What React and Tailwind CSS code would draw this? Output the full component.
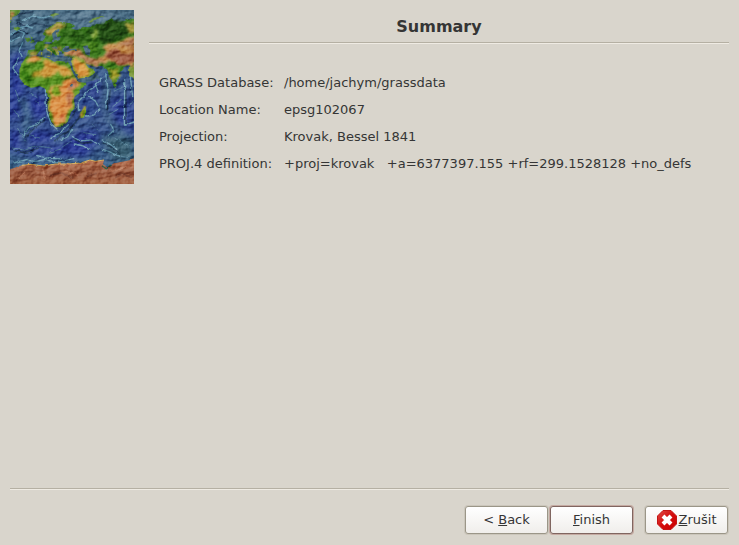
import React from 'react';

const rows = [
  { label: 'GRASS Database:', value: '/home/jachym/grassdata' },
  { label: 'Location Name:', value: 'epsg102067' },
  { label: 'Projection:', value: 'Krovak, Bessel 1841' },
  { label: 'PROJ.4 definition:', value: '+proj=krovak   +a=6377397.155 +rf=299.1528128 +no_defs' },
];

const ReliefMap = () => (
  <svg viewBox="30 30 372 522" className="block w-[124px] h-[174px] shrink-0" role="img" aria-label="Relief map">
    <defs>
      <linearGradient id="sea" x1="0" y1="0" x2="0" y2="1">
        <stop offset="0" stopColor="#4c6f86" />
        <stop offset="0.2" stopColor="#436783" />
        <stop offset="0.38" stopColor="#37578a" />
        <stop offset="0.6" stopColor="#344d8d" />
        <stop offset="0.78" stopColor="#36568b" />
        <stop offset="1" stopColor="#47738a" />
      </linearGradient>
      <linearGradient id="ice" x1="0" y1="0" x2="0" y2="1">
        <stop offset="0" stopColor="#b87453" />
        <stop offset="0.5" stopColor="#9a5a40" />
        <stop offset="1" stopColor="#a4603f" />
      </linearGradient>
      <filter id="rough" x="-5%" y="-5%" width="110%" height="110%" colorInterpolationFilters="sRGB">
        <feTurbulence type="fractalNoise" baseFrequency="0.06" numOctaves="2" seed="4" result="n" />
        <feDisplacementMap in="SourceGraphic" in2="n" scale="9" xChannelSelector="R" yChannelSelector="G" />
      </filter>
      <filter id="soft" x="-20%" y="-20%" width="140%" height="140%" colorInterpolationFilters="sRGB">
        <feTurbulence type="fractalNoise" baseFrequency="0.05" numOctaves="3" seed="9" result="n" />
        <feDisplacementMap in="SourceGraphic" in2="n" scale="24" xChannelSelector="R" yChannelSelector="G" />
        <feGaussianBlur stdDeviation="2.5" />
      </filter>
      <filter id="haze" x="-30%" y="-30%" width="160%" height="160%" colorInterpolationFilters="sRGB">
        <feGaussianBlur stdDeviation="11" />
      </filter>
      <filter id="relief" x="0" y="0" width="100%" height="100%" colorInterpolationFilters="sRGB">
        <feTurbulence type="fractalNoise" baseFrequency="0.035 0.05" numOctaves="4" seed="12" result="n" />
        <feColorMatrix in="n" type="matrix" values="0 0 0 0 0  0 0 0 0 0  0 0 0 0 0  1.4 0 0 0 -0.2" />
        <feDiffuseLighting surfaceScale="6" diffuseConstant="0.72" lightingColor="#ffffff">
          <feDistantLight azimuth="225" elevation="44" />
        </feDiffuseLighting>
      </filter>
      <clipPath id="frame">
        <rect x="30" y="30" width="372" height="522" />
      </clipPath>
    </defs>

    <g clipPath="url(#frame)">
      <rect x="30" y="30" width="372" height="522" fill="url(#sea)" />

      {/* deep basins and ridges */}
      <g filter="url(#haze)" opacity="0.8">
        <path d="M30 165 L75 150 L55 205 L75 270 L50 350 L30 360Z" fill="#29379a" />
        <path d="M85 285 L140 290 L135 350 L95 350Z" fill="#2b389c" />
        <path d="M30 390 L150 395 L180 440 L250 390 L300 400 L260 470 L90 465 L30 450Z" fill="#2b379b" />
        <path d="M265 235 L310 235 L300 300 L262 290Z" fill="#30418e" />
        <path d="M325 300 L372 290 L380 400 L325 370Z" fill="#2c3c95" />
        <path d="M240 300 L270 285 L290 340 L250 350Z" fill="#2f4c92" />
        <path d="M380 290 L402 280 L402 420 L380 400Z" fill="#31458e" />
        <path d="M60 290 L85 340 L70 430" fill="none" stroke="#467188" strokeWidth="20" />
        <path d="M320 230 L315 320 L335 370 L370 400" fill="none" stroke="#4b7387" strokeWidth="18" />
        <path d="M60 445 L170 430 L245 375 L320 360" fill="none" stroke="#4c6d92" strokeWidth="13" />
        <path d="M300 405 L402 410 L402 485 L340 480Z" fill="#3c6470" />
        <path d="M150 45 L260 35 L360 40 L300 70 L180 65Z" fill="#628096" />
      </g>

      <g filter="url(#rough)" fill="none" strokeLinecap="round" strokeLinejoin="round">
        <g stroke="#203955" strokeWidth="5" opacity="0.75">
          <path d="M32 47 L68 40 L98 35" />
          <path d="M53 68 L79 83 L103 70 L141 77" />
          <path d="M38 105 L66 91 L82 101" />
          <path d="M143 288 L145 345 L168 386 L188 380 L217 349 L235 316" />
          <path d="M78 411 L106 381 L132 363" />
          <path d="M164 422 L205 394 L240 350" />
          <path d="M331 272 L322 329" />
          <path d="M377 268 L379 372" />
          <path d="M222 417 L244 430 L275 427 M310 427 L332 440 L352 455 M40 451 L76 458 L114 445" />
        </g>
        <g stroke="#6d9db2" strokeWidth="4">
          <path d="M70 61 L99 48 L125 54 L157 47" />
          <path d="M59 84 L79 78 L97 84" />
          <path d="M30 104 L53 91 L74 99 L67 113" />
          <path d="M32 123 L60 111" />
          <path d="M55 177 L39 205 L53 224" />
          <path d="M68 128 L57 151 L66 169" />
          <path d="M136 265 L140 335 L154 372 L171 387" />
          <path d="M72 407 L87 382 L110 374 L135 352" />
          <path d="M153 416 L180 398 L205 374" />
          <path d="M181 421 L203 410 L218 385" />
          <path d="M236 335 L234 306 L265 272 L289 257" />
          <path d="M266 289 L286 303 L294 318" />
          <path d="M296 277 L286 254 L305 232" />
          <path d="M317 221 L324 267 L318 325" />
          <path d="M374 235 L373 376 L402 366" />
          <path d="M390 221 L398 289" />
          <path d="M259 348 L282 345 L299 329" />
          <path d="M218 410 L240 423 L273 420 L299 435" />
          <path d="M307 420 L330 433 L350 448" />
          <path d="M325 407 L342 390 L332 373" />
          <path d="M223 432 L250 438 L266 448" />
          <path d="M307 448 L328 455 L358 469" />
          <path d="M111 467 L145 475 L184 477" />
          <path d="M38 489 L79 479 L105 485 L134 478 L169 488 L221 476" />
        </g>
        <g stroke="#5a879e" strokeWidth="3" opacity="0.8">
          <path d="M37 443 L74 451 L112 438 L153 444" />
          <path d="M46 270 L60 306 M42 330 L57 352 M92 279 L112 293 M107 304 L123 318" />
          <path d="M53 385 L77 423 M91 405 L119 414 M188 440 L211 425 M150 457 L183 447" />
          <path d="M343 273 L366 263 M338 320 L365 298 M324 345 L354 328 M389 318 L400 302" />
          <path d="M277 370 L293 390 M251 397 L285 404 M345 415 L390 439 M364 469 L394 475" />
        </g>
      </g>

      {/* Eurasia and Africa */}
      <g filter="url(#rough)">
        <path d="M82 167 L84 151 L106 148 L104 139 L113 125 L130 122 L137 109 L128 102 L139 88 L158 74 L182 66 L210 70 L226 78 L213 85 L229 91 L249 81 L275 82 L286 72 L311 75 L318 64 L333 57 L349 69 L371 64 L386 58 L406 61 L406 203 L386 195 L370 202 L359 219 L350 245 L340 253 L329 229 L322 209 L306 198 L279 199 L256 189 L247 174 L222 171 L195 168 L188 157 L177 151 L169 139 L155 142 L174 160 L169 168 L145 147 L123 149 L109 165Z" fill="#3d791f" />
        <path d="M80 169 L67 188 L58 209 L59 235 L73 253 L94 264 L119 258 L136 266 L142 284 L147 303 L143 322 L150 356 L167 381 L184 380 L203 365 L213 336 L226 323 L221 297 L237 277 L260 248 L238 247 L228 232 L212 202 L203 185 L174 181 L164 186 L132 168 L107 170Z" fill="#5b9424" />
        <path d="M212 178 L225 165 L252 176 L258 190 L274 204 L286 216 L274 229 L237 243 L223 218Z" fill="#77a12b" />
        <path d="M256 317 L259 333 L253 352 L242 355 L241 338Z" fill="#6ca620" />
        <path d="M91 107 L99 109 L96 117 L105 126 L90 129 L96 120Z M79 116 L87 112 L86 124 L78 126Z" fill="#54872c" />
        <path d="M30 30 L64 30 L55 42 L39 53 L30 70Z M38 87 L53 80 L62 85 L51 92Z" fill="#649438" />
        <path d="M148 45 L166 39 L179 42 L159 50Z M265 67 L279 55 L305 48 L314 51 L290 58 L273 68Z" fill="#71944a" />
        <path d="M387 199 L406 194 L406 249 L398 232 L388 229Z" fill="#789638" />
        <path d="M342 248 L350 254 L347 264 L340 258Z" fill="#67a12d" />
      </g>

      {/* lowlands */}
      <g filter="url(#soft)">
        <path d="M305 70 L365 61 L389 76 L391 103 L363 118 L333 121 L307 135 L292 108 L266 104 L275 82Z" fill="#244f16" />
        <path d="M198 88 L245 92 L275 106 L271 127 L223 124 L193 112Z" fill="#2f6419" />
        <path d="M246 133 L289 124 L297 148 L271 159Z" fill="#49821e" />
        <path d="M67 200 L82 213 L92 241 L115 250 L77 253 L61 233Z" fill="#387b14" />
        <path d="M174 182 L205 184 L214 203 L192 196 L174 191Z" fill="#3b7e1e" />
        <path d="M171 226 L200 224 L208 236 L187 239Z" fill="#55911e" />
        <path d="M313 185 L332 184 L348 198 L375 197 L368 206 L333 208Z" fill="#3f7e1d" />
      </g>

      {/* highlands */}
      <g filter="url(#soft)">
        <path d="M79 184 L106 169 L129 172 L126 183 L92 190Z" fill="#d9984e" />
        <path d="M134 175 L162 189 L185 194 L210 205 L220 225 L194 227 L174 219 L157 235 L135 229 L116 215 L132 202Z" fill="#cf9b42" />
        <path d="M99 214 L116 211 L127 229 L113 236 L94 231Z" fill="#b99c34" />
        <path d="M142 272 L156 258 L181 256 L202 235 L227 229 L243 252 L223 276 L215 295 L219 317 L202 348 L190 371 L169 376 L151 347 L150 314 L158 294Z" fill="#db9249" />
        <path d="M217 179 L227 174 L248 191 L267 207 L266 225 L237 238 L223 213Z" fill="#d99b46" />
        <path d="M135 98 L155 79 L178 71 L202 73 L183 81 L162 102 L140 110Z" fill="#b79848" />
        <path d="M89 153 L108 150 L109 162 L91 166Z" fill="#d0974a" />
        <path d="M125 137 L143 131 L150 139 L136 145Z M158 139 L180 137 L180 146 L160 144Z" fill="#bd994b" />
        <path d="M279 85 L291 85 L289 114 L280 124Z" fill="#82a13c" />
        <path d="M303 139 L327 128 L352 130 L380 117 L406 107 L406 201 L375 191 L354 194 L329 181 L307 191 L283 187 L280 174 L310 168 L317 153Z" fill="#c58f50" />
        <path d="M374 70 L402 67 L402 99 L384 97Z" fill="#a89b40" />
        <path d="M192 155 L216 151 L251 154 L260 169 L278 177 L308 177 L309 190 L278 198 L258 187 L240 170 L194 168Z" fill="#bd8559" />
        <path d="M326 208 L354 204 L356 221 L343 245 L332 225Z" fill="#a59e2e" />
        <path d="M249 322 L255 323 L252 347 L246 345Z" fill="#db994f" />
        <path d="M31 35 L47 36 L35 54Z" fill="#c97b50" />
      </g>

      {/* high mountains */}
      <g filter="url(#soft)">
        <path d="M317 163 L343 147 L373 151 L406 139 L406 194 L377 190 L351 191 L326 175Z" fill="#a05d44" />
        <path d="M347 148 L375 149 L402 145 L402 160 L365 162Z" fill="#c08b48" />
        <path d="M356 135 L386 119 L406 111 L406 132 L377 140Z" fill="#ac7352" />
        <path d="M214 239 L232 235 L231 257 L217 277 L207 269Z M201 281 L216 285 L210 309 L197 323Z" fill="#b97550" />
        <path d="M261 168 L278 174 L293 191 L279 195 L256 181Z" fill="#a9734f" />
        <path d="M191 344 L198 338 L192 361 L182 362Z" fill="#d37e53" />
        <path d="M155 263 L174 259 L184 278 L178 291 L158 284Z" fill="#80a629" />
      </g>

      {/* inland water */}
      <g filter="url(#rough)" fill="#4a6a7d">
        <path d="M130 130 L138 125 L152 126 L160 116 L156 101 L166 91 L178 86 L179 91 L168 99 L172 111 L184 109 L176 120 L157 127 L147 134Z" />
        <path d="M112 166 L123 151 L139 148 L151 159 L160 171 L172 169 L179 175 L205 171 L218 177 L210 187 L180 183 L161 181 L139 169 L121 170Z" />
        <path d="M188 145 L203 138 L209 147 L228 146 L231 154 L214 151 L201 157 L187 154Z" />
        <path d="M249 139 L262 136 L271 151 L269 167 L257 163Z" />
        <path d="M209 191 L218 204 L235 236 L264 232 L289 218 L301 235 L264 246 L234 245 L219 219Z" fill="#3b5c73" />
        <path d="M257 191 L273 201 L286 202 L281 207 L266 203Z" fill="#4c7189" />
        <path d="M211 252 L219 252 L217 260 L210 259Z" />
      </g>

      {/* Italy and the Balkans */}
      <g filter="url(#rough)">
        <path d="M138 147 L146 146 L157 158 L154 165 L147 156Z M163 147 L178 150 L176 167 L169 161Z" fill="#8f9440" />
        <path d="M123 155 L127 155 L127 166 L122 166Z M143 168 L151 168 L148 172Z" fill="#8f9440" />
      </g>

      {/* Antarctica */}
      <g filter="url(#rough)">
        <path d="M24 510 L66 496 L90 493 L132 498 L164 492 L203 492 L241 489 L269 480 L286 484 L312 480 L309 493 L324 504 L344 490 L408 477 L408 560 L24 560Z" fill="url(#ice)" />
        <path d="M65 496 L91 493 L133 498 L164 492 L203 492 L242 489 L270 480 L286 484 L312 480" fill="none" stroke="#d7ae5c" strokeWidth="3" />
        <path d="M306 497 L319 507 L334 494" fill="none" stroke="#3b624b" strokeWidth="4" />
        <path d="M128 505 L134 540 M55 533 L73 520 M175 518 L205 514 L235 526 M332 515 L364 503 L402 499" fill="none" stroke="#c38567" strokeWidth="5" opacity="0.6" />
        <path d="M150 526 L184 518 L220 535 M260 530 L290 520 M345 533 L370 521 L395 533" fill="none" stroke="#713e2f" strokeWidth="5" opacity="0.5" />
      </g>
      <rect x="30" y="30" width="372" height="522" filter="url(#relief)" className="mix-blend-soft-light" />
    </g>
  </svg>
);

const Divider = () => (
  <hr className="h-[2px] w-full border-0 border-t border-b border-t-[#b5b0a3] border-b-[#efebe3]" />
);

const WizardButton = ({ children, primary }) => (
  <button
    type="button"
    className={`flex h-7 w-[83px] items-center justify-center rounded-[3px] border bg-linear-to-b from-white to-[#f0eeeb] ${
      primary
        ? 'border-[#806660] shadow-[0_0_0_1px_#c5aaa2]'
        : 'border-[#9b9688] shadow-[0_0_0_1px_#cbc6bb]'
    }`}
  >
    {children}
  </button>
);

const CancelIcon = () => (
  <svg viewBox="0 0 20 20" className="mr-0.5 h-5 w-5 shrink-0" aria-hidden="true">
    <defs>
      <linearGradient id="cancel" x1="0" y1="0" x2="1" y2="1">
        <stop offset="0" stopColor="#df4a45" />
        <stop offset="0.5" stopColor="#d40c0c" />
        <stop offset="1" stopColor="#c90000" />
      </linearGradient>
    </defs>
    <path d="M6 .5h8L19.5 6v8L14 19.5H6L.5 14V6Z" fill="url(#cancel)" stroke="#c41414" />
    <path d="m6 6 8 8m0-8-8 8" stroke="#fff" strokeWidth="4" />
  </svg>
);

const App = () => {
  return (
    <main className="flex min-h-screen flex-col bg-[#d9d5cc] p-[10px] font-['DejaVu_Sans',sans-serif] text-[13px] leading-4 text-[#353535]">
      <div className="flex flex-1 items-start gap-[15px]">
        <ReliefMap />
        <section className="min-w-0 flex-1">
          <h1 className="h-8 pt-[5px] text-center text-[16px] leading-6 font-bold">Summary</h1>
          <Divider />
          <dl className="mt-[31px] grid grid-cols-[115px_1fr] gap-x-[10px] gap-y-[11px] pl-[10px]">
            {rows.map((row) => (
              <React.Fragment key={row.label}>
                <dt className="whitespace-nowrap">{row.label}</dt>
                <dd className="whitespace-pre">{row.value}</dd>
              </React.Fragment>
            ))}
          </dl>
        </section>
      </div>

      <footer className="pb-px">
        <Divider />
        <div className="mt-4 flex justify-end pr-px">
          <div className="mr-3 flex gap-[2px]">
            <WizardButton>
              <span>&lt; <u>B</u>ack</span>
            </WizardButton>
            <WizardButton primary>
              <span><u>F</u>inish</span>
            </WizardButton>
          </div>
          <WizardButton>
            <CancelIcon />
            <span><u>Z</u>rušit</span>
          </WizardButton>
        </div>
      </footer>
    </main>
  );
};

export default App;
